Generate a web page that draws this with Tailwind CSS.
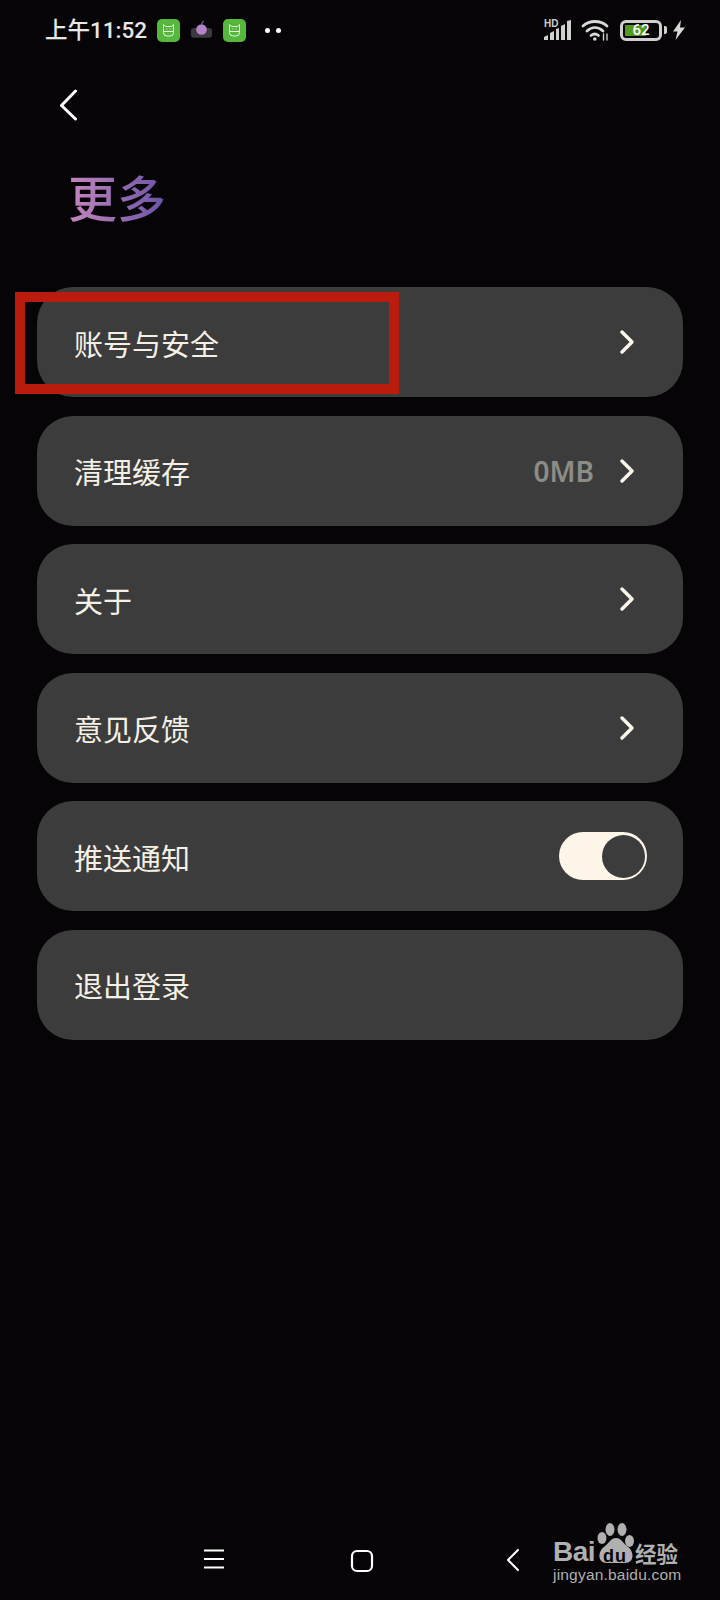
<!DOCTYPE html>
<html lang="zh-CN">
<head>
    <meta charset="UTF-8">
    <meta name="viewport" content="width=device-width, initial-scale=1.0">
    <title>更多</title>
    <script src="https://cdn.jsdelivr.net/npm/@tailwindcss/browser@4"></script>
</head>
<body class="bg-[#060406] font-['Noto_Sans_CJK_SC','Noto_Sans',sans-serif]">
<div class="relative w-[720px] h-[1600px] overflow-hidden">

    <!-- status bar -->
    <div class="flex items-center h-[60px] pl-[45px] pr-[34px]">
        <span class="text-[22.500px] leading-[30px] font-medium text-[#e8e8e8] font-['Roboto','Noto_Sans_CJK_SC',sans-serif] w-[112px] whitespace-nowrap">上午11:52</span>
        <div class="w-[23px] h-[23px] rounded-[5px] bg-[#55b83c] flex items-center justify-center">
            <svg width="15" height="15" viewBox="0 0 15 15" fill="none" stroke="#e6f5df" stroke-width="1"><path d="M2.500 1.500 4.500 3.500h6l2-2v8a3.500 3.500 0 0 1-3.500 3.500H6A3.500 3.500 0 0 1 2.500 9.500z"/><path d="M2.500 8.500h10"/><path d="M5.500 6h.8M8.700 6h.8"/></svg>
        </div>
        <div class="ml-[10px] w-[23px] h-[23px] flex items-center justify-center">
            <svg width="24" height="24" viewBox="0 0 24 24"><path d="M1 13a3 3 0 0 1 3-3h16a3 3 0 0 1 3 3v4a3 3 0 0 1-3 3H4a3 3 0 0 1-3-3z" fill="#3a3a3e"/><circle cx="12" cy="11.500" r="5.500" fill="#b583c9"/><path d="M12 6 14 2.500" stroke="#7a4f90" stroke-width="1.500"/></svg>
        </div>
        <div class="ml-[10px] w-[23px] h-[23px] rounded-[5px] bg-[#55b83c] flex items-center justify-center">
            <svg width="15" height="15" viewBox="0 0 15 15" fill="none" stroke="#e6f5df" stroke-width="1"><path d="M2.500 1.500 4.500 3.500h6l2-2v8a3.500 3.500 0 0 1-3.500 3.500H6A3.500 3.500 0 0 1 2.500 9.500z"/><path d="M2.500 8.500h10"/><path d="M5.500 6h.8M8.700 6h.8"/></svg>
        </div>
        <div class="ml-[19px] flex gap-[6px]">
            <div class="w-[5px] h-[5px] rounded-full bg-white"></div>
            <div class="w-[5px] h-[5px] rounded-full bg-white"></div>
        </div>
        <div class="ml-auto flex items-center">
            <div class="relative w-[27px] h-[20px]">
                <span class="absolute left-0 top-[-1px] text-[10px] leading-[10px] font-bold text-[#cfcfcf] font-['Liberation_Sans',sans-serif]">HD</span>
                <svg class="absolute left-0 top-0" width="27" height="20" viewBox="0 0 27 20" fill="#cfcfcf"><path d="M0 20v-3l4-2v5zM6 20v-7l4-2v9zM12 20V9l3-1v12zM17 20V6l4-2v16zM23 20V1l4-1v20z"/></svg>
            </div>
            <svg class="ml-[10px]" width="29" height="24" viewBox="0 0 29 24" fill="none" stroke="#d8d8d8" stroke-width="2.800" stroke-linecap="round"><path d="M2 8C8.500 2 19.500 2 26 8"/><path d="M6 13c5-4.500 11-4.500 16 0"/><path d="M10 17.500c2.500-2 5-2 7.500 0"/><circle cx="13.800" cy="21" r="1.800" fill="#d8d8d8" stroke="none"/><path d="M22.500 16v6M26 16v6" stroke-width="1.300"/></svg>
            <div class="ml-[10px] relative w-[42px] h-[21px] rounded-[6px] border-[3px] border-[#cfcfcf] p-[2px]">
                <div class="w-[21px] h-full rounded-[1px] bg-[#4f9a22]"></div>
                <span class="absolute inset-0 flex items-center justify-center text-[15px] leading-none font-medium text-white font-['Roboto',sans-serif]">62</span>
            </div>
            <div class="ml-[2px] w-[3px] h-[8px] rounded-r-[2px] bg-[#cfcfcf]"></div>
            <svg class="ml-[5px]" width="14" height="20" viewBox="0 0 14 20" fill="#d8d8d8"><path d="M9 0 1 11.500h4.500L3.500 20 13 7.500H8z"/></svg>
        </div>
    </div>

    <!-- back -->
    <div class="pl-[59px] pt-[29px] h-[60px]">
        <svg width="20" height="32" viewBox="0 0 20 32" fill="none" stroke="#ffffff" stroke-width="3" stroke-linecap="round" stroke-linejoin="round"><path d="M16.500 2 2.500 16.500 16.500 30"/></svg>
    </div>

    <!-- title -->
    <h1 class="ml-[68px] mt-[44px] w-fit h-[64px] text-[49px] leading-[64px] font-medium bg-gradient-to-r from-[#c687bd] to-[#6a52a6] bg-clip-text text-transparent">更多</h1>

    <!-- list -->
    <div class="mt-[59.400px] mx-[37px] flex flex-col gap-[18.500px]">
        <div class="h-[110px] rounded-[36px] bg-[#3c3c3c] flex items-center pl-[37px] pr-[46px]">
            <span class="mt-[2px] text-[29px] text-[#f5f0e6]">账号与安全</span>
            <svg class="ml-auto" width="18" height="26" viewBox="0 0 18 26" fill="none" stroke="#fdf8ec" stroke-width="3.500" stroke-linecap="round" stroke-linejoin="round"><path d="M3 3 13 13 3 23"/></svg>
        </div>
        <div class="h-[110px] rounded-[36px] bg-[#3c3c3c] flex items-center pl-[37px] pr-[46px]">
            <span class="mt-[2px] text-[29px] text-[#f5f0e6]">清理缓存</span>
            <span class="ml-auto mr-[25px] text-[28px] font-semibold text-[#8d8d87] font-['Noto_Sans',sans-serif]">0MB</span>
            <svg width="18" height="26" viewBox="0 0 18 26" fill="none" stroke="#fdf8ec" stroke-width="3.500" stroke-linecap="round" stroke-linejoin="round"><path d="M3 3 13 13 3 23"/></svg>
        </div>
        <div class="h-[110px] rounded-[36px] bg-[#3c3c3c] flex items-center pl-[37px] pr-[46px]">
            <span class="mt-[2px] text-[29px] text-[#f5f0e6]">关于</span>
            <svg class="ml-auto" width="18" height="26" viewBox="0 0 18 26" fill="none" stroke="#fdf8ec" stroke-width="3.500" stroke-linecap="round" stroke-linejoin="round"><path d="M3 3 13 13 3 23"/></svg>
        </div>
        <div class="h-[110px] rounded-[36px] bg-[#3c3c3c] flex items-center pl-[37px] pr-[46px]">
            <span class="mt-[2px] text-[29px] text-[#f5f0e6]">意见反馈</span>
            <svg class="ml-auto" width="18" height="26" viewBox="0 0 18 26" fill="none" stroke="#fdf8ec" stroke-width="3.500" stroke-linecap="round" stroke-linejoin="round"><path d="M3 3 13 13 3 23"/></svg>
        </div>
        <div class="h-[110px] rounded-[36px] bg-[#3c3c3c] flex items-center pl-[37px] pr-[36px]">
            <span class="mt-[2px] text-[29px] text-[#f5f0e6]">推送通知</span>
            <div class="ml-auto w-[88px] h-[48px] rounded-full bg-[#fdf6e9] flex items-center justify-end pr-[2px]">
                <div class="w-[43px] h-[43px] rounded-full bg-[#3c3c3c]"></div>
            </div>
        </div>
        <div class="h-[110px] rounded-[36px] bg-[#3c3c3c] flex items-center pl-[37px] pr-[36px]">
            <span class="mt-[2px] text-[29px] text-[#f5f0e6]">退出登录</span>
        </div>
    </div>

    <!-- red annotation -->
    <div class="absolute left-[15px] top-[292px] w-[384px] h-[102px] border-[10px] border-[#b91c0c]"></div>

    <!-- nav bar -->
    <svg class="absolute left-[203px] top-[1549px]" width="22" height="20" viewBox="0 0 22 20" fill="none" stroke="#ffffff" stroke-width="2"><path d="M1 1.500h20M1 10h20M1 18.500h20"/></svg>
    <svg class="absolute left-[349px] top-[1548px]" width="26" height="26" viewBox="0 0 26 26" fill="none" stroke="#ffffff" stroke-width="2.200"><rect x="3" y="3" width="20" height="20" rx="5"/></svg>
    <svg class="absolute left-[505px] top-[1547px]" width="16" height="26" viewBox="0 0 16 26" fill="none" stroke="#ffffff" stroke-width="2" stroke-linecap="round" stroke-linejoin="round"><path d="M13 3 3 13 13 23"/></svg>

    <!-- watermark -->
    <div class="absolute left-[553px] top-[1524px] w-[130px] h-[62px] text-[#b0b0b0]">
        <svg class="absolute left-[43px] top-[-1px]" width="40" height="42" viewBox="0 0 40 42" fill="#b0b0b0"><ellipse cx="6" cy="15" rx="4.500" ry="6"/><ellipse cx="14" cy="6.500" rx="4.500" ry="6.500"/><ellipse cx="26" cy="6.500" rx="4.500" ry="6.500"/><ellipse cx="33.500" cy="18" rx="4.500" ry="6"/><path d="M20 15c5 0 7 5 12 9 6 4 7 16-3 16H11C1 40 2 28 8 24c5-4 7-9 12-9z"/></svg>
        <span class="absolute left-0 top-[10px] text-[28px] leading-[36px] font-bold font-['Liberation_Sans',sans-serif] tracking-[-0.5px]">Bai</span>
        <span class="absolute left-[50px] top-[22px] text-[18px] leading-[20px] font-bold tracking-[1px] text-[#060406] font-['Liberation_Sans',sans-serif]">du</span>
        <span class="absolute left-[82px] top-[16px] text-[21.500px] leading-[26px] font-bold">经验</span>
        <span class="absolute left-0 top-[41px] text-[15.500px] leading-[20px] font-['Liberation_Sans',sans-serif] tracking-[0.2px] whitespace-nowrap">jingyan.baidu.com</span>
    </div>
</div>
</body>
</html>
